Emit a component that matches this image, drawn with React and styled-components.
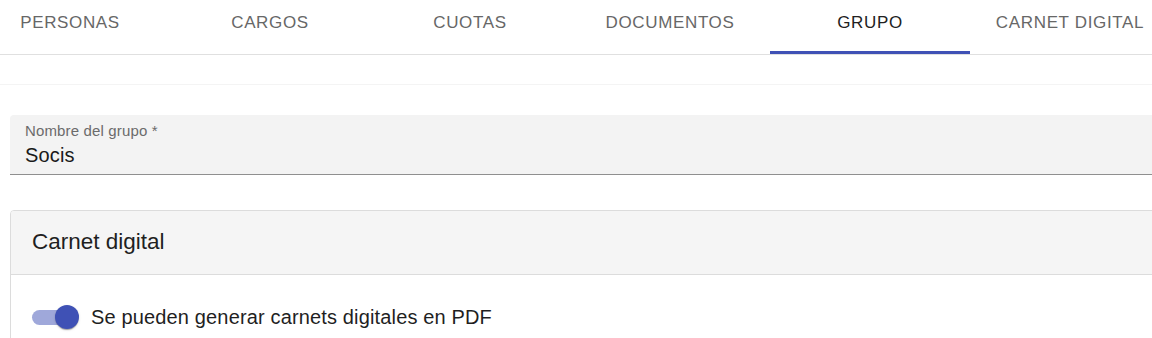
import React from 'react'
import styled, { createGlobalStyle } from 'styled-components'

const GlobalStyle = createGlobalStyle`
  body {
    margin: 0;
    background: #ffffff;
    font-family: "Liberation Sans", Arial, sans-serif;
    overflow: hidden;
  }
`

const Page = styled.div`
  width: 1152px;
  height: 338px;
  overflow: hidden;
`

const TabBar = styled.div`
  height: 54px;
  border-bottom: 1px solid #e0e0e0;
  overflow: hidden;
`

const TabList = styled.div`
  display: flex;
  margin-left: -30px;
`

const Tab = styled.div`
  flex: none;
  width: 200px;
  height: 54px;
  box-sizing: border-box;
  padding-top: 13px;
  position: relative;
  text-align: center;
  font-size: 17px;
  line-height: 20px;
  letter-spacing: 0.65px;
  text-transform: uppercase;
  color: ${p => (p.$active ? '#212121' : '#676767')};

  &::after {
    content: '';
    display: ${p => (p.$active ? 'block' : 'none')};
    position: absolute;
    left: 0;
    right: 0;
    bottom: 0;
    height: 3px;
    background: #3f51b5;
  }
`

const Strip = styled.div`
  height: 29px;
  border-bottom: 1px solid #f4f4f4;
`

const Content = styled.div`
  width: 1200px;
  padding: 30px 0 0 10px;
`

const Field = styled.div`
  height: 60px;
  box-sizing: border-box;
  background: #f3f3f3;
  border-radius: 4px 4px 0 0;
  border-bottom: 1px solid #8f8f8f;
  padding: 7px 0 0 15px;
`

const FieldLabel = styled.div`
  font-size: 15px;
  line-height: 18px;
  letter-spacing: 0.15px;
  color: #6b6b6b;
`

const FieldValue = styled.div`
  margin-top: 3px;
  font-size: 20px;
  line-height: 24px;
  letter-spacing: 0.15px;
  color: #1a1a1a;
`

const Card = styled.div`
  margin-top: 35px;
  border: 1px solid #dcdcdc;
  border-radius: 4px;
  overflow: hidden;
`

const CardHeader = styled.div`
  height: 64px;
  display: flex;
  align-items: center;
  padding: 0 0 2px 21px;
  box-sizing: border-box;
  background: #f5f5f5;
  border-bottom: 1px solid #dcdcdc;
  font-size: 22.5px;
  color: #1f1f1f;
`

const CardBody = styled.div`
  height: 80px;
  padding: 30px 0 0 21px;
  box-sizing: border-box;
`

const SwitchRow = styled.label`
  display: flex;
  align-items: center;
  gap: 12px;
  font-size: 20px;
  letter-spacing: 0.15px;
  color: #1f1f1f;
`

const SwitchRoot = styled.span`
  position: relative;
  display: inline-flex;
  align-items: center;
  width: 47px;
  height: 24px;
  flex: none;
`

const Track = styled.span`
  width: 42px;
  height: 15px;
  border-radius: 8px;
  background: ${p => (p.$on ? '#9fa8da' : '#bdbdbd')};
`

const Thumb = styled.span`
  position: absolute;
  top: 0;
  left: ${p => (p.$on ? '23px' : '0')};
  width: 24px;
  height: 24px;
  border-radius: 50%;
  background: ${p => (p.$on ? '#3f51b5' : '#fafafa')};
  box-shadow: 0 2px 1px -1px rgba(0, 0, 0, 0.2), 0 1px 1px 0 rgba(0, 0, 0, 0.14),
    0 1px 3px 0 rgba(0, 0, 0, 0.12);
`

const Switch = ({ on }) => (
  <SwitchRoot>
    <Track $on={on} />
    <Thumb $on={on} />
  </SwitchRoot>
)

const tabs = ['Personas', 'Cargos', 'Cuotas', 'Documentos', 'Grupo', 'Carnet digital']

export default function App() {
  return (
    <Page>
      <GlobalStyle />
      <TabBar>
        <TabList>
          {tabs.map(t => (
            <Tab key={t} $active={t === 'Grupo'}>{t}</Tab>
          ))}
        </TabList>
      </TabBar>
      <Strip />
      <Content>
        <Field>
          <FieldLabel>Nombre del grupo *</FieldLabel>
          <FieldValue>Socis</FieldValue>
        </Field>
        <Card>
          <CardHeader>Carnet digital</CardHeader>
          <CardBody>
            <SwitchRow>
              <Switch on />
              Se pueden generar carnets digitales en PDF
            </SwitchRow>
          </CardBody>
        </Card>
      </Content>
    </Page>
  )
}
